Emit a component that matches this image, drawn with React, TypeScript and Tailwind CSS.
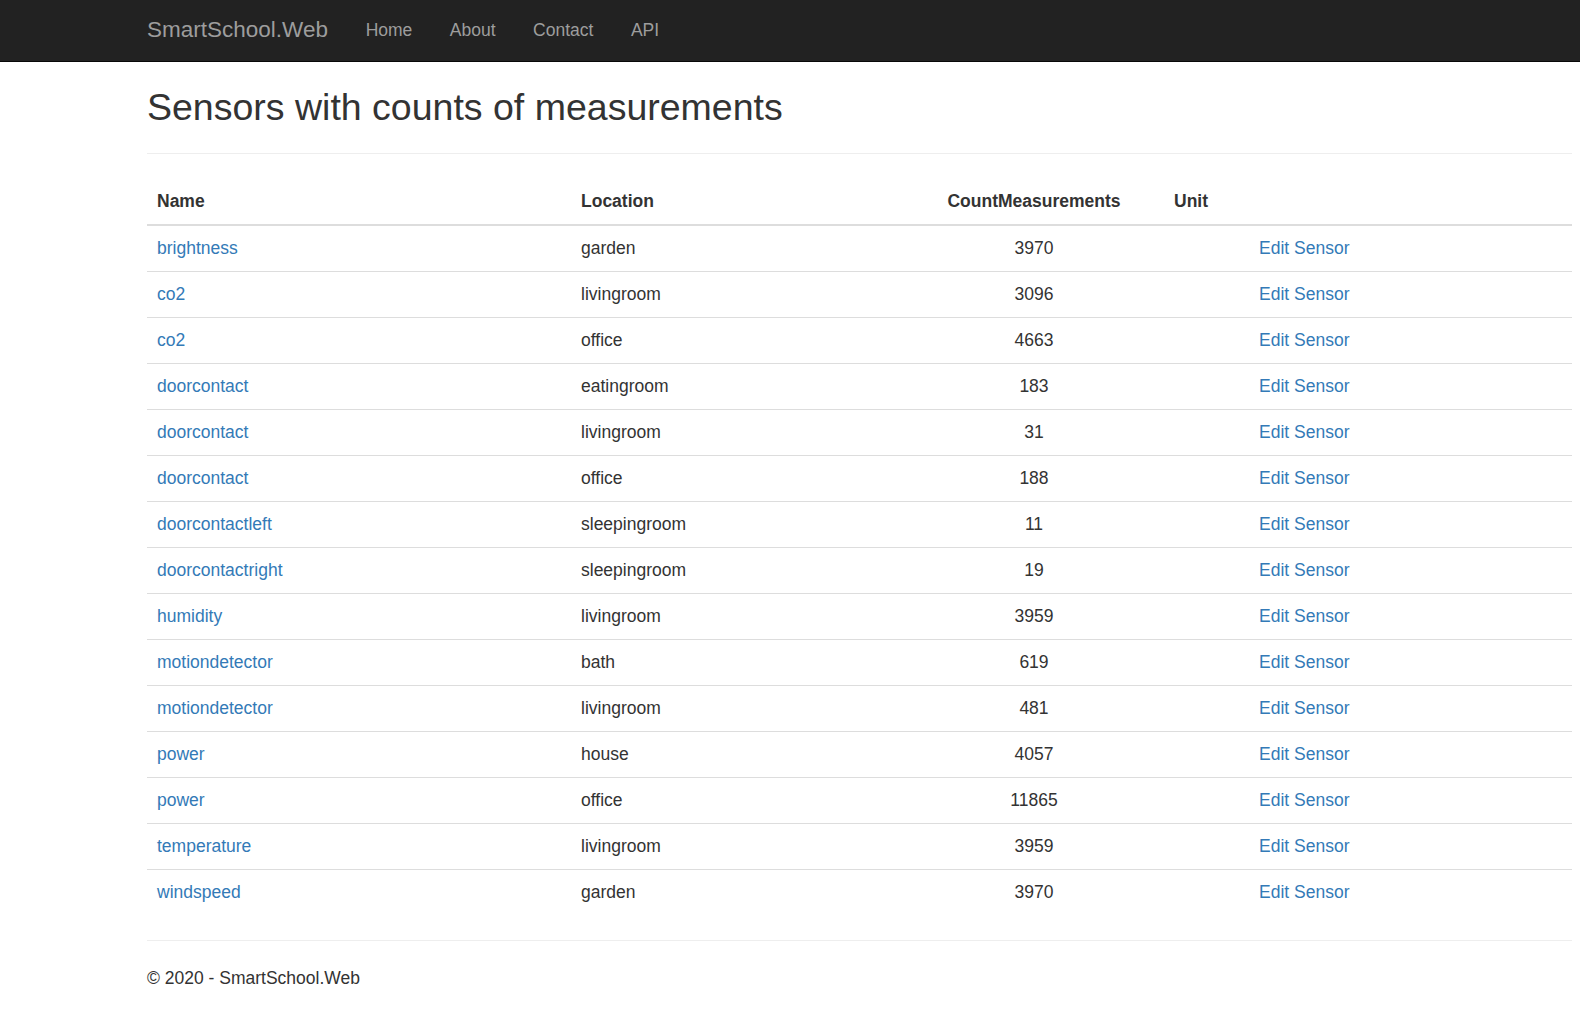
const rows: [string, string, number][] = [
  ["brightness", "garden", 3970],
  ["co2", "livingroom", 3096],
  ["co2", "office", 4663],
  ["doorcontact", "eatingroom", 183],
  ["doorcontact", "livingroom", 31],
  ["doorcontact", "office", 188],
  ["doorcontactleft", "sleepingroom", 11],
  ["doorcontactright", "sleepingroom", 19],
  ["humidity", "livingroom", 3959],
  ["motiondetector", "bath", 619],
  ["motiondetector", "livingroom", 481],
  ["power", "house", 4057],
  ["power", "office", 11865],
  ["temperature", "livingroom", 3959],
  ["windspeed", "garden", 3970],
];

const navLinks = ["Home", "About", "Contact", "API"];

export default function App() {
  return (
    <div className="min-h-screen bg-white font-['Liberation_Sans',Arial,sans-serif] text-[17.5px] leading-[25px] text-[#333]">
      <nav className="h-[62px] border-b border-[#080808] bg-[#222]">
        <div className="flex h-full pl-[147px]">
          <a className="pt-[17px] pr-[19px] text-[22.5px] leading-[25px] text-[#9d9d9d]">
            SmartSchool.Web
          </a>
          <ul className="flex">
            {navLinks.map((l) => (
              <li key={l}>
                <a className="block px-[18.75px] pt-[17.5px] text-[#9d9d9d]">{l}</a>
              </li>
            ))}
          </ul>
        </div>
      </nav>

      <main className="pl-[147px] pr-[8px]">
        <h2 className="mt-[25px] text-[37.5px] leading-[41px] font-medium">
          Sensors with counts of measurements
        </h2>
        <hr className="mt-[25px] border-t border-[#eee]" />

        <table className="mt-[25px] w-full table-fixed border-separate border-spacing-0">
          <thead>
            <tr className="font-bold">
              <th className="w-[424px] border-b-2 border-[#ddd] px-[10px] py-[10px] text-left">Name</th>
              <th className="w-[333px] border-b-2 border-[#ddd] px-[10px] py-[10px] text-left">Location</th>
              <th className="w-[260px] border-b-2 border-[#ddd] px-[10px] py-[10px] text-center">CountMeasurements</th>
              <th className="w-[85px] border-b-2 border-[#ddd] px-[10px] py-[10px] text-left">Unit</th>
              <th className="border-b-2 border-[#ddd] px-[10px] py-[10px]"></th>
            </tr>
          </thead>
          <tbody>
            {rows.map(([name, loc, count], i) => {
              const td = i === 0 ? "px-[10px] py-[10px]" : "border-t border-[#ddd] px-[10px] py-[10px]";
              return (
                <tr key={i}>
                  <td className={td}>
                    <a className="text-[#337ab7]">{name}</a>
                  </td>
                  <td className={td}>{loc}</td>
                  <td className={td + " text-center"}>{count}</td>
                  <td className={td}></td>
                  <td className={td}>
                    <a className="text-[#337ab7]">Edit Sensor</a>
                  </td>
                </tr>
              );
            })}
          </tbody>
        </table>

        <hr className="mt-[25px] border-t border-[#eee]" />
        <footer className="pt-[25px] pb-[12px]">
          <p>© 2020 - SmartSchool.Web</p>
        </footer>
      </main>
    </div>
  );
}
